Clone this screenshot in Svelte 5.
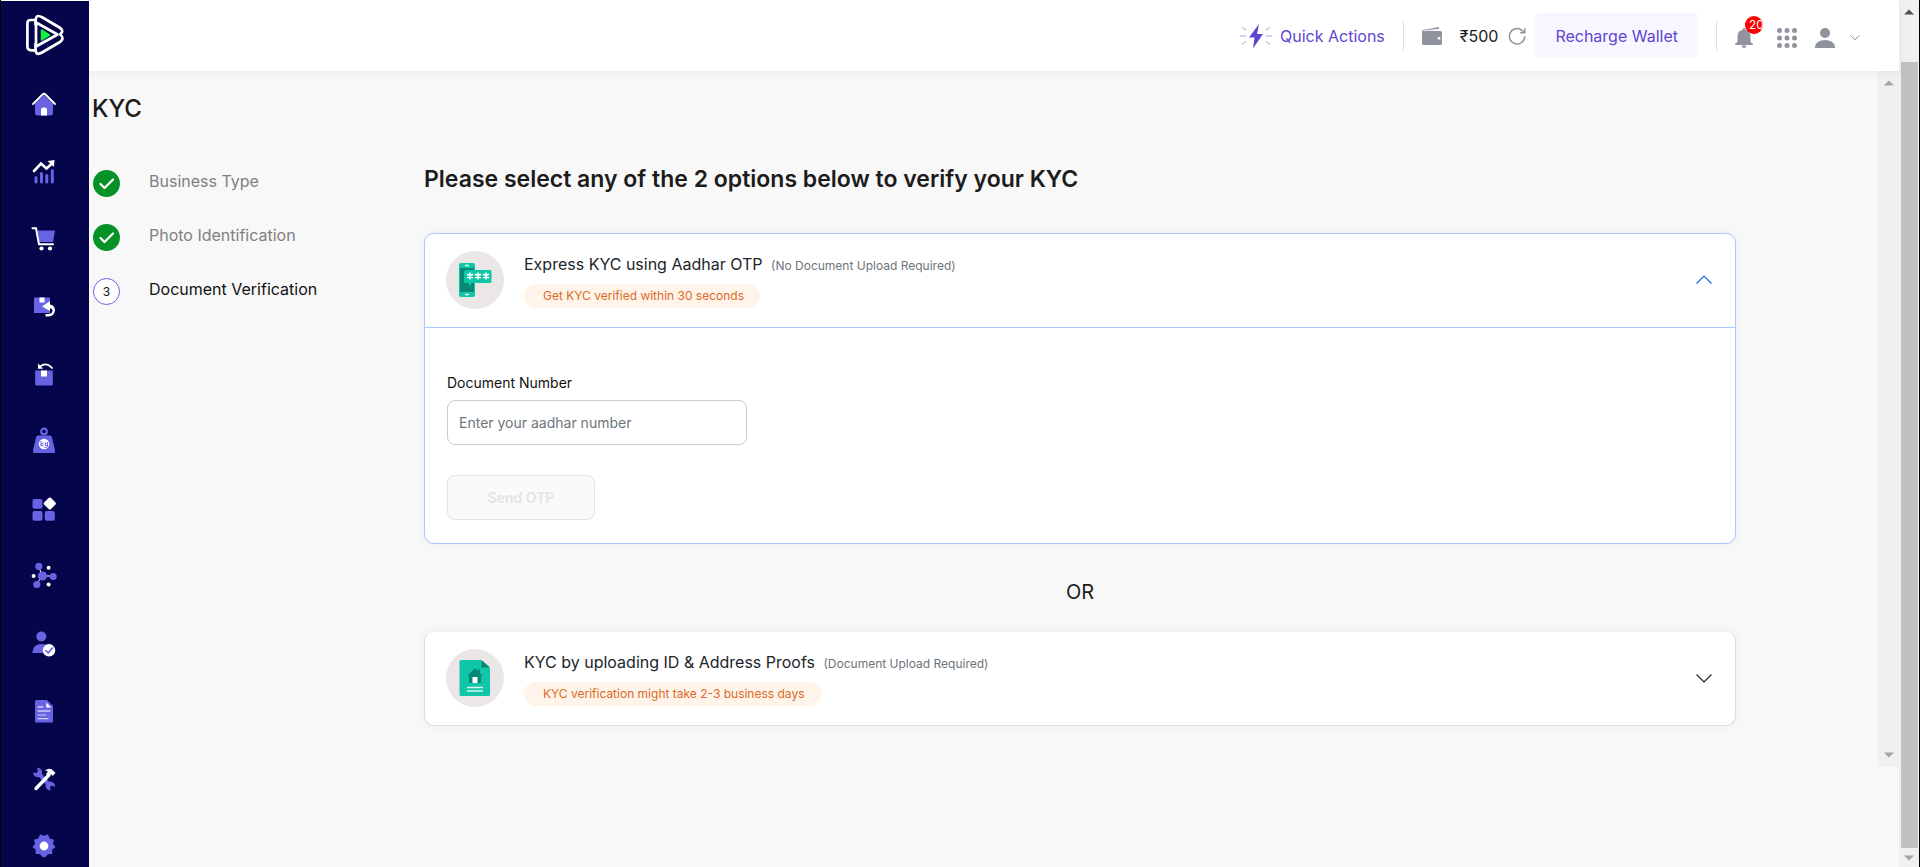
<script lang="ts">
  const steps = [
    { label: "Business Type", done: true },
    { label: "Photo Identification", done: true },
    { label: "Document Verification", done: false },
  ];

  let aadhar = $state("");
  let open = $state("express");

  const toggle = (name: string) => (open = open === name ? "" : name);
</script>

{#snippet chevron()}
  <svg class="chevron" viewBox="0 0 18 18" width="18" height="18" aria-hidden="true">
    <path d="M1.5 5.5 9 13l7.5-7.5" fill="none" stroke="currentColor" stroke-width="1.2" />
  </svg>
{/snippet}

{#snippet arrow(dir: string, tone: string)}
  <svg class="arrow {dir} {tone}" viewBox="0 0 10 6" width="10" height="6" aria-hidden="true">
    <path d="M0 5.5 5 .5l5 5z" fill="currentColor" />
  </svg>
{/snippet}

<div class="shell">
  <aside>
    <a class="logo" href="/" aria-label="Dashboard home">
      <svg viewBox="0 0 38 42" width="38" height="42" fill="none" stroke="#fff" stroke-width="2.7" stroke-linejoin="round" stroke-linecap="round">
        <path d="M9.5 10.5V9c0-7 1.5-8.500 7-5.500l17 10c3.500 2.200 3.500 4 1 6.500" />
        <path d="M9 6H5C2.500 6 1.400 7 1.400 9.500v23c0 2.500 1.500 3.800 4 3.800H9" />
        <path d="M9.500 30v4.500c0 5.500 2 6.500 6.500 4l18-10.500c3-2 3.500-5 .5-7" />
        <path d="M10 8.500v24L31.500 20.500z" />
        <path d="M15.500 16v10l8-5z" fill="#12f03c" stroke="#12f03c" stroke-width="1.5" />
      </svg>
    </a>
    <nav aria-label="Main">
      <a href="/home" aria-label="Home">
        <svg viewBox="0 0 24 24">
          <path class="p" d="M3 11.500 12 3l9 8.500V21a2.500 2.500 0 0 1-2.500 2.500h-13A2.500 2.500 0 0 1 3 21z" />
          <path class="w" d="M9 23.500V17.500a2 2 0 0 1 2-2h2a2 2 0 0 1 2 2v6z" />
          <path class="ws" d="m1 12 9.500-9.500q1.500-1.500 3 0L23 12" stroke-width="1.8" />
        </svg>
      </a>
      <a href="/analytics" aria-label="Analytics">
        <svg viewBox="0 0 24 24">
          <path class="ps" d="M4 18.500v4.500M9.500 14.500V23M14.800 16.500V23M20.300 11.500V23" stroke-width="3" />
          <path class="ws" d="m2 12 7-7.500 5.500 5L20.500 4" stroke-width="2.6" />
          <path class="w" d="m15.500 2 7-1-.5 7z" />
        </svg>
      </a>
      <a href="/orders" aria-label="Orders">
        <svg viewBox="0 0 24 24">
          <path class="p" d="M5.500 3.500H23L21 15H7.500z" />
          <path class="ws" d="M.5 1.300H4L7 17.200h14" stroke-width="2" />
          <circle class="w" cx="9.5" cy="21.5" r="2.1" /><circle class="w" cx="18" cy="21.5" r="2.1" />
        </svg>
      </a>
      <a href="/returns" aria-label="Returns">
        <svg viewBox="0 0 24 24">
          <path class="p" d="M2 3.500h16v15.500H2z" />
          <path class="w" d="M7.500 3.500h5v5h-5zM10 12.500l8-5.500v3.500q4.500.5 5 5.500-.5 6-6.500 6.500h-3V20h3q4-.5 4-3.500 0-2-2.500-2.300V17z" />
        </svg>
      </a>
      <a href="/reverse" aria-label="Reverse orders">
        <svg viewBox="0 0 24 24">
          <path class="p" d="M3.200 8.500h17.600v14a1 1 0 0 1-1 1H4.200a1 1 0 0 1-1-1z" />
          <path class="w" d="M9 8.500h6v6H9zM6 1.500v5.200h5.200z" />
          <path class="ws" d="M8 4.500q6.500-5 12 1.500" stroke-width="1.8" />
        </svg>
      </a>
      <a href="/weight" aria-label="Weight discrepancy">
        <svg viewBox="0 0 24 24">
          <circle class="ps" cx="12" cy="2.5" r="2.8" stroke-width="2.2" />
          <path class="p" d="M6 6.500h12q1.500 0 2 2l3 13q.5 2.500-2 2.500H3q-2.500 0-2-2.500l3-13q.5-2 2-2z" />
          <circle class="w" cx="12" cy="15" r="5.2" />
          <path class="ps" d="M9 12.500v4.500M11.500 14 9 15.500l2.500 1.500M15.500 14v3.500q0 1-2.500 1M15.300 14h-2v2.500h2" stroke-width="1" />
        </svg>
      </a>
      <a href="/products" aria-label="Products">
        <svg viewBox="0 0 24 24">
          <rect class="p" x=".5" y="2" width="10" height="9.8" rx="2" />
          <rect class="p" x=".5" y="14" width="10" height="9.8" rx="2" />
          <rect class="p" x="12.8" y="14" width="10" height="9.8" rx="2" />
          <path class="w" d="M16.800.8q1-.8 2 0l4.700 4.800q.8 1 0 2l-4.700 4.700q-1 .8-2 0l-4.700-4.700q-.8-1 0-2z" />
        </svg>
      </a>
      <a href="/integrations" aria-label="Integrations">
        <svg viewBox="0 0 24 24">
          <path class="ws" d="M10 12 7 3M10 12h11M10 12l-5 8" stroke-width="1" />
          <circle class="p" cx="10.5" cy="12" r="4.6" /><circle class="p" cx="6.8" cy="2.3" r="3.6" />
          <circle class="p" cx="21.2" cy="12.5" r="3.5" /><circle class="p" cx="4.8" cy="20.5" r="3.6" />
          <circle class="w" cx="16.6" cy="3.8" r="2" /><circle class="w" cx="1.6" cy="12" r="2" />
          <circle class="w" cx="16.6" cy="20.5" r="2" />
        </svg>
      </a>
      <a href="/customers" aria-label="Customers">
        <svg viewBox="0 0 24 24">
          <circle class="p" cx="9.3" cy="4.5" r="5" />
          <path class="p" d="M.5 21v-1.500q.8-7.500 9-7.500 5 0 6.500 1.500V21z" />
          <circle class="w" cx="17" cy="18.3" r="6.2" />
          <path class="ps" d="m13.800 18.500 2.400 2.300 4.300-4.800" stroke-width="1.6" />
        </svg>
      </a>
      <a href="/billing" aria-label="Billing">
        <svg viewBox="0 0 24 24">
          <path class="p" d="M4.500 1H15l6 6v15a1.500 1.500 0 0 1-1.500 1.500h-15A1.500 1.500 0 0 1 3 22V2.500A1.500 1.500 0 0 1 4.500 1z" />
          <path class="w" d="M14.300 3.500V8.500h5z" />
          <path class="ws" d="M6 8h5M6 12h12" stroke-width="1.2" />
          <path class="ws" d="M6 16h8M6 19.700h10" stroke-width="1.2" opacity=".7" />
        </svg>
      </a>
      <a href="/tools" aria-label="Tools">
        <svg viewBox="0 0 24 24">
          <path class="p" d="M1 5.500 4.500 6 6 4 5 .8Q9.500.8 10 5v2l7 7.500q4-.5 6 3.500v2l-3-1.500-2 1.500.5 3h2q-6 1.500-7-4v-2L7 10Q2 11 1 5.500z" />
          <path class="ws" d="M4 21.500 17 8" stroke-width="3.4" />
          <path class="w" d="m13 3.500 3-1.500q3-1 5 1.500l2.500 2.500-3 3-1.500-2-2.500 2.500-2.500-2.500 2-2.500z" />
        </svg>
      </a>
      <a href="/settings" aria-label="Settings">
        <svg viewBox="0 0 24 24">
          <path class="p" stroke="#6863e3" stroke-width="1.5" stroke-linejoin="round" d="m12 2.800 3.500-1.500 1.700 3.800 3.900 1.200L20 10l2.500 3-3.200 2.300.2 4-4 .2L13 22.500l-1-.8-1 .8-2.700-3-4-.2.200-4L1.500 13 4 10 2.900 6.300l3.900-1.200 1.700-3.800z" />
          <circle class="w" cx="12" cy="12" r="4.4" />
        </svg>
      </a>
    </nav>
  </aside>

  <div class="page">
    <header>
      <a class="quick" href="/quick-actions">
        <svg viewBox="0 0 32 26" width="32" height="26" aria-hidden="true">
          <path d="M19 1 9 14.500h5.500L13 25.500 23 11h-6z" fill="#5f45cf" />
          <path d="M2 4.500 6.500 7M0 13h6M2 21l4.500-2.500M30 4.500 25.500 7M32 13h-6M30 21l-4.500-2.500" stroke="#c5bcf0" stroke-width="1.3" fill="none" />
        </svg>
        Quick Actions
      </a>
      <span class="rule"></span>
      <div class="wallet">
        <svg viewBox="0 0 20 20" width="20" height="20" aria-hidden="true">
          <path d="M1 4 17 1v2.500L3 5H18.500A1.500 1.500 0 0 1 20 6.500v11a1.500 1.500 0 0 1-1.500 1.500h-17A1.500 1.500 0 0 1 0 17.500V5.500Q0 4.300 1 4z" fill="#8f939d" />
          <path d="M1.500 4.800 17 3.300" stroke="#fff" stroke-width=".8" />
          <circle cx="17" cy="12.3" r="1.4" fill="#fff" />
        </svg>
        <span>₹500</span>
        <button class="plain" aria-label="Refresh balance">
          <svg viewBox="0 0 18 18" width="18" height="18" fill="none" stroke="#8f939d" stroke-width="1.5">
            <path d="M16.800 9.300A7.700 7.700 0 1 1 14 3.300l2.300 2M16.800 1.200v4.500h-4.600" />
          </svg>
        </button>
      </div>
      <button class="recharge">Recharge Wallet</button>
      <span class="rule"></span>
      <div class="tools">
        <button class="plain bell" aria-label="Notifications">
          <svg viewBox="0 0 18 20" width="18" height="20" fill="#8f939d">
            <path d="M9 0q1.300 0 1.500 1.700 5 1.200 5 7V13q0 2 2.500 3v1H0v-1q2.500-1 2.500-3V8.700q0-5.800 5-7Q7.700 0 9 0zM6.500 17.500h5Q11 20 9 20t-2.500-2.500z" />
          </svg>
          <span class="badge">20</span>
        </button>
        <button class="plain" aria-label="Apps">
          <svg viewBox="0 0 20 20" width="20" height="20" fill="#8f939d">
            {#each [2.5, 10, 17.5] as y}
              {#each [2.5, 10, 17.5] as x}
                <circle cx={x} cy={y} r="2.5" />
              {/each}
            {/each}
          </svg>
        </button>
        <button class="plain user" aria-label="Account">
          <svg viewBox="0 0 20 20" width="20" height="20" fill="#8f939d">
            <circle cx="10" cy="5" r="5" />
            <path d="M0 20v-1.500Q1.500 12 10 12t10 6.500V20z" />
          </svg>
          <svg viewBox="0 0 10 6" width="10" height="6">
            <path d="m.5.5 4.500 4.300L9.500.5" fill="none" stroke="#8f939d" />
          </svg>
        </button>
      </div>
    </header>

    <div class="scroller">
      <main>
        <h1>KYC</h1>
        <div class="columns">
          <ol>
            {#each steps as step, i}
              <li class:done={step.done}>
                <span class="mark">
                  {#if step.done}
                    <svg viewBox="0 0 27 27" width="27" height="27" aria-label="Completed">
                      <path d="m7.500 14 4 4 8.500-8.500" fill="none" stroke="#fff" stroke-width="2.2" stroke-linecap="round" stroke-linejoin="round" />
                    </svg>
                  {:else}
                    {i + 1}
                  {/if}
                </span>
                <span class="label">{step.label}</span>
              </li>
            {/each}
          </ol>

          <section>
            <h2>Please select any of the 2 options below to verify your KYC</h2>

            <article class:open={open === "express"}>
              <button class="head" aria-expanded={open === "express"} onclick={() => toggle("express")}>
                <span class="disc">
                  <svg viewBox="0 0 34 34" width="34" height="34" aria-hidden="true">
                    <rect x="1" width="16" height="34" rx="2" fill="#10c6a8" />
                    <path d="M2 5h14v24H2z" fill="#078873" />
                    <path d="M7 2.500h4M7 31.500h4" stroke="#e4f8f4" stroke-width="1.5" />
                    <path d="M7.500 7H32a1.500 1.500 0 0 1 1.500 1.500V18.500A1.500 1.500 0 0 1 32 20H14l-3 3.500V20H7.500A1.500 1.500 0 0 1 6 18.500V8.500A1.500 1.500 0 0 1 7.500 7z" fill="#10c6a8" />
                    <path d="M12 9.500v7M9 11.300l6 3.400M15 11.300l-6 3.400M20 9.500v7M17 11.300l6 3.400M23 11.300l-6 3.400M28 9.500v7M25 11.300l6 3.400M31 11.300l-6 3.400" stroke="#fff" stroke-width="1.6" />
                  </svg>
                </span>
                <span class="text">
                  <span class="title">Express KYC using Aadhar OTP <small>(No Document Upload Required)</small></span>
                  <span class="pill">Get KYC verified within 30 seconds</span>
                </span>
                {@render chevron()}
              </button>
              {#if open === "express"}
                <form onsubmit={(e) => e.preventDefault()}>
                  <label for="aadhar">Document Number</label>
                  <input id="aadhar" type="text" placeholder="Enter your aadhar number" bind:value={aadhar} />
                  <button class="send" disabled={aadhar.length < 12}>Send OTP</button>
                </form>
              {/if}
            </article>

            <p>OR</p>

            <article class:open={open === "upload"}>
              <button class="head" aria-expanded={open === "upload"} onclick={() => toggle("upload")}>
                <span class="disc">
                  <svg viewBox="0 0 34 36" width="34" height="36" aria-hidden="true">
                    <path d="M3 0h20l9 8v26.500a1.500 1.500 0 0 1-1.500 1.500H3a1.500 1.500 0 0 1-1.500-1.500v-33A1.500 1.500 0 0 1 3 0z" fill="#10c6a8" />
                    <path d="M23.500 0v7.500H32z" fill="#078873" />
                    <path d="M17 8l3 3V9.500h2V13l2.500 3H23v7H11v-7H9.500z" fill="#078873" />
                    <path d="M14.500 17h5v6h-5z" fill="#fff" />
                    <path d="M9 27.500h16M9 31h16" stroke="#d7f7f1" stroke-width="1.3" />
                  </svg>
                </span>
                <span class="text">
                  <span class="title">KYC by uploading ID &amp; Address Proofs <small>(Document Upload Required)</small></span>
                  <span class="pill">KYC verification might take 2-3 business days</span>
                </span>
                {@render chevron()}
              </button>
            </article>
          </section>
        </div>
      </main>
      <div class="track inner">
        {@render arrow("up", "light")}
        {@render arrow("down", "light")}
      </div>
    </div>
  </div>

  <div class="track outer">
    {@render arrow("up", "dark")}
    <div class="thumb"></div>
    {@render arrow("down", "light")}
  </div>
</div>

<style>
  :global(body) {
    background: #f8f8f8;
    font-family: Inter, "Liberation Sans", sans-serif;
    color: #1c1c1c;
  }

  .shell {
    box-sizing: border-box;
    display: flex;
    height: 100vh;
    overflow: hidden;
    border: solid #000;
    border-width: 0 1px;
  }

  button {
    font: inherit;
    cursor: pointer;
  }

  aside {
    box-sizing: border-box;
    display: flex;
    flex-direction: column;
    align-items: center;
    gap: 36px;
    flex: none;
    width: 88px;
    padding: 13px 0 9px;
    border-top: 1px solid #fff;
    background: #05054b;

    a {
      display: block;
    }

    svg {
      display: block;
      overflow: visible;
    }

    nav {
      flex: 1;
      display: flex;
      flex-direction: column;
      justify-content: space-between;
      padding-right: 2px;

      svg {
        width: 24px;
        height: 24px;
      }
    }
  }

  .p {
    fill: #6863e3;
  }

  .w {
    fill: #fff;
  }

  .ps,
  .ws {
    fill: none;
    stroke-linecap: round;
  }

  .ps {
    stroke: #6863e3;
  }

  .ws {
    stroke: #fff;
  }

  .page {
    flex: 1;
    min-width: 0;
  }

  header {
    position: relative;
    box-sizing: border-box;
    display: flex;
    align-items: center;
    justify-content: flex-end;
    height: 71px;
    padding-right: 39px;
    background: #fff;
    box-shadow: 0 2px 8px rgba(0, 0, 0, 0.06);

    svg {
      display: block;
    }
  }

  .quick {
    display: flex;
    align-items: center;
    gap: 8px;
    color: #5f45cf;
    text-decoration: none;
  }

  .rule {
    width: 1px;
    height: 30px;
    margin: 0 18px;
    background: #dcdde0;
  }

  .wallet {
    display: flex;
    align-items: center;

    span {
      margin: 0 10px 0 18px;
    }
  }

  .plain {
    display: flex;
    align-items: center;
    padding: 0;
    border: 0;
    background: none;
  }

  .recharge {
    height: 45px;
    margin-left: 9px;
    padding: 0 20px;
    border: 0;
    border-radius: 4px;
    background: #f8f7ff;
    color: #5f45cf;
  }

  .tools {
    display: flex;
    align-items: center;
    gap: 18px;
    padding-top: 4px;
  }

  .bell {
    position: relative;
    margin-right: 6px;
  }

  .badge {
    position: absolute;
    top: -12px;
    left: 10px;
    box-sizing: border-box;
    width: 18px;
    height: 18px;
    padding-left: 4px;
    border-radius: 9px;
    background: #f00;
    color: #fff;
    font-size: 12px;
    line-height: 18px;
    text-align: left;
    overflow: hidden;
  }

  .user {
    gap: 15px;
  }

  .scroller {
    display: flex;
    height: calc(100vh - 171px);
  }

  main {
    flex: 1;
    min-width: 0;
    padding: 23px 142px 0 3px;
  }

  h1,
  h2,
  p,
  ol {
    margin: 0;
  }

  h1 {
    font-size: 24px;
    font-weight: 500;
    line-height: 30px;
  }

  .columns {
    display: flex;
    padding: 40px 0 0 1px;
  }

  ol {
    box-sizing: border-box;
    flex: none;
    width: 331px;
    padding: 6px 0 0;
    list-style: none;
  }

  li {
    display: flex;
    gap: 29px;
    height: 54px;
    color: #111;

    .mark {
      box-sizing: border-box;
      display: flex;
      align-items: center;
      justify-content: center;
      width: 27px;
      height: 27px;
      border: 1px solid #7559e0;
      border-radius: 50%;
      background: #fff;
      font-size: 12px;
    }

    .label {
      line-height: 22px;
    }

    &.done {
      color: #808080;

      .mark {
        border: 0;
        background: #059227;
      }
    }
  }

  section {
    flex: 1;
    min-width: 0;
  }

  h2 {
    font-size: 23px;
    font-weight: 600;
    line-height: 30px;
    padding-bottom: 39px;
  }

  article {
    border: 1px solid #dcdcdc;
    border-top-color: #f1f1f1;
    border-radius: 10px;
    background: #fff;
    box-shadow: 0 0 8px rgba(0, 0, 0, 0.05);

    &.open {
      border-color: #a9c9fb;
    }
  }

  .head {
    display: flex;
    align-items: center;
    gap: 20px;
    width: 100%;
    height: 93px;
    padding: 0 22px 2px 21px;
    box-sizing: border-box;
    border: 0;
    border-radius: 10px;
    background: none;
    color: #212529;
    text-align: left;
  }

  .open .head {
    height: 94px;
    border-bottom: 1px solid #a9c9fb;
    border-radius: 10px 10px 0 0;
  }

  .disc {
    display: flex;
    align-items: center;
    justify-content: center;
    width: 58px;
    height: 58px;
    border-radius: 50%;
    background: #ebe7e6;
  }

  .text {
    flex: 1;
    display: flex;
    flex-direction: column;
    align-items: flex-start;
    gap: 5px;
  }

  .title {
    font-size: 16px;
    line-height: 26px;
  }

  small {
    margin-left: 4px;
    color: #6c757d;
    font-size: 12px;
  }

  .pill {
    padding: 0 16px 0 19px;
    border-radius: 12px;
    background: #fff4ea;
    color: #dc6a1f;
    font-size: 12px;
    line-height: 24px;
  }

  .open .chevron {
    color: #1a6ce0;
    transform: rotate(180deg);
  }

  form {
    display: flex;
    flex-direction: column;
    align-items: flex-start;
    padding: 45px 22px 23px;
  }

  label {
    font-size: 14px;
    line-height: 20px;
    color: #111;
    margin-bottom: 7px;
  }

  input,
  .send {
    box-sizing: border-box;
    height: 45px;
    border-radius: 8px;
    font-family: inherit;
    font-size: 14px;
  }

  input {
    width: 300px;
    padding: 0 11px;
    border: 1px solid #ccc;
    background: #fff;

    &::placeholder {
      color: #6c757d;
      opacity: 1;
    }
  }

  .send {
    width: 148px;
    margin-top: 30px;
    border: 1px solid #5f45cf;
    background: #5f45cf;
    color: #fff;
    font-weight: 600;

    &:disabled {
      border-color: #e4e4e4;
      background: #fafafa;
      color: #e4e4e4;
      cursor: default;
    }
  }

  p {
    padding: 33px 0 24px;
    font-size: 20px;
    line-height: 30px;
    text-align: center;
  }

  .track {
    box-sizing: border-box;
    display: flex;
    flex-direction: column;
    align-items: center;
    justify-content: space-between;
    flex: none;
    padding: 9px 0;
    background: #f0f0f0;
  }

  .inner {
    width: 21px;
  }

  .outer {
    width: 20px;
    gap: 47px;
    padding-bottom: 6px;
  }

  .thumb {
    flex: 1;
    align-self: stretch;
    margin: 0 1px -40px 2px;
    background: #c1c1c1;
  }

  .arrow {
    flex: none;
    color: #a3a3a3;

    &.dark {
      color: #505050;
    }

    &.down {
      transform: rotate(180deg);
    }
  }
</style>
